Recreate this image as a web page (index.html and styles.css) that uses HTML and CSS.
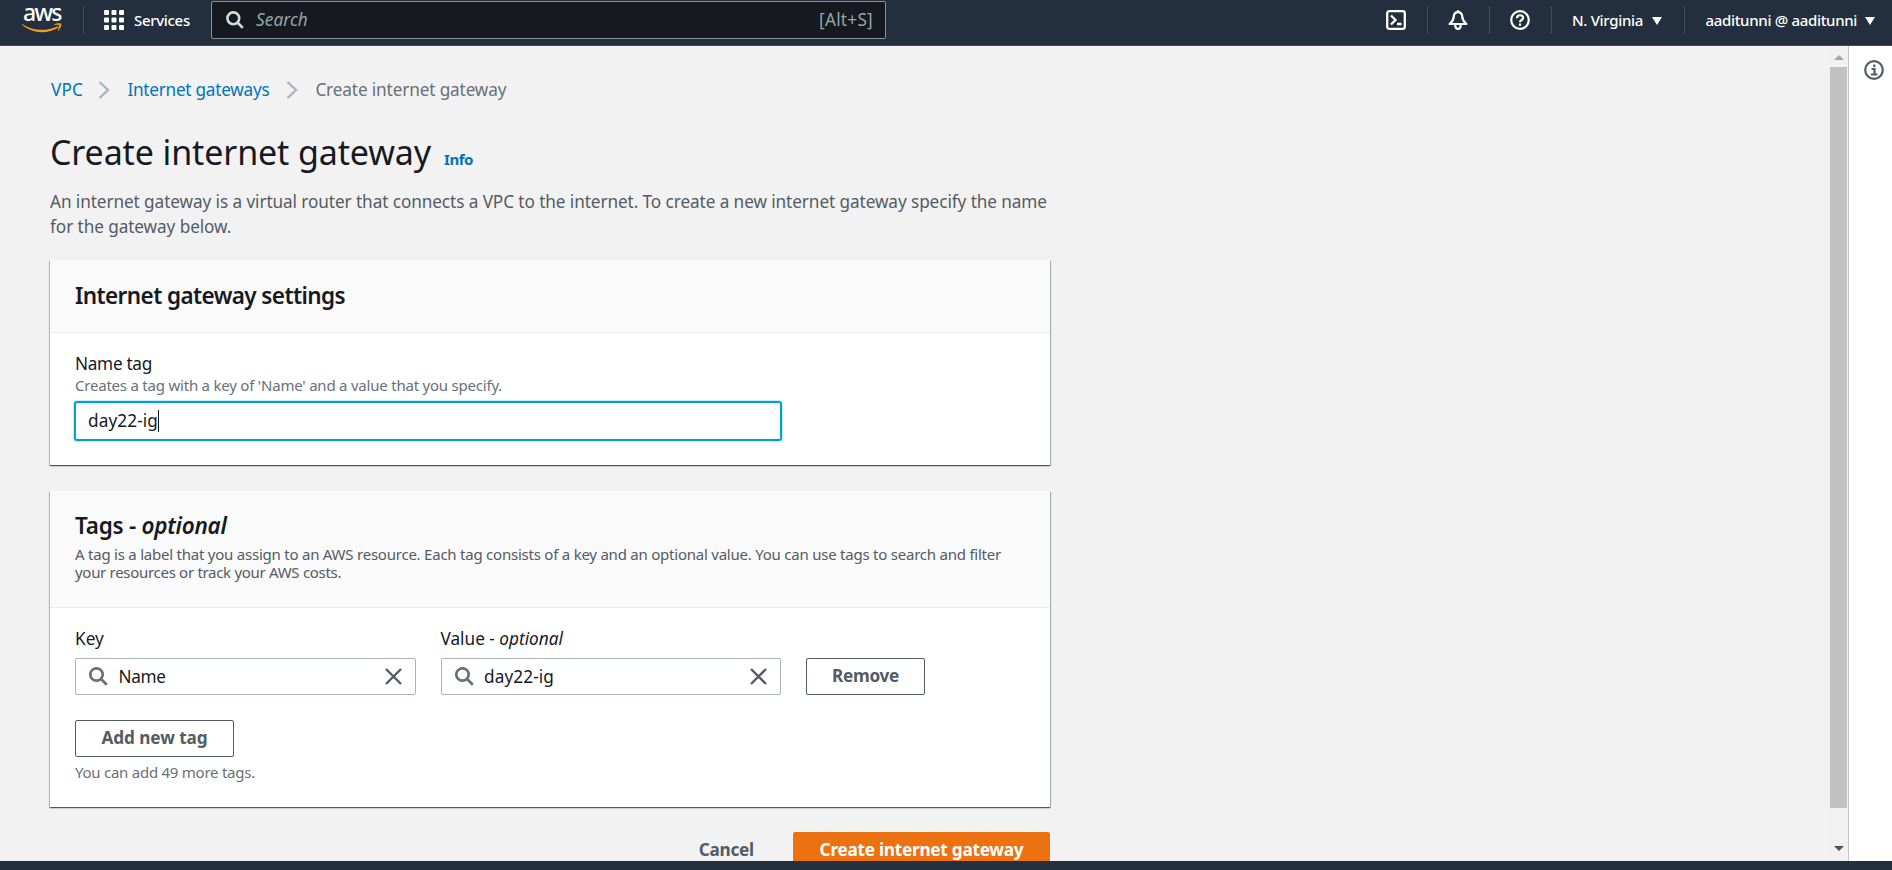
FILE: index.html
```html
<!DOCTYPE html>
<html lang="en">
<head>
<meta charset="utf-8">
<title>Create internet gateway</title>
<link rel="stylesheet" href="styles.css">
</head>
<body>
<header class="topbar">
  <div class="brand">
    <span class="brand-name">aws</span>
    <svg class="smile" width="40" height="11" viewBox="0 0 40 11"><path d="M0.5 1.2C11 8 24 8.6 35.200 3.400C36.500 3 37 4 36 4.700C25 11.500 10 10.500 0.300 2.100C-0.200 1.500 0 1 0.500 1.200Z" fill="#f79a1c"/><path d="M32 1.400C34.500 -0.200 39 -0.100 39.300 0.800C39.700 2.200 38.500 5.800 36.500 7.600C36 8 35.700 7.700 35.900 7.200C36.600 5.500 37.500 3 37.100 2.300C36.600 1.600 34 1.800 32.500 2C31.800 2.100 31.500 1.800 32 1.400Z" fill="#f79a1c"/></svg>
  </div>
  <i class="rule"></i>
  <div class="services">
    <svg width="20" height="20" viewBox="0 0 20 20" fill="#fff"><rect width="5" height="5" rx="1"/><rect x="7.500" width="5" height="5" rx="1"/><rect x="15" width="5" height="5" rx="1"/><rect y="7.500" width="5" height="5" rx="1"/><rect x="7.500" y="7.500" width="5" height="5" rx="1"/><rect x="15" y="7.500" width="5" height="5" rx="1"/><rect y="15" width="5" height="5" rx="1"/><rect x="7.500" y="15" width="5" height="5" rx="1"/><rect x="15" y="15" width="5" height="5" rx="1"/></svg>
    <span class="nav-text">Services</span>
  </div>
  <div class="search">
    <svg width="18" height="18" viewBox="0 0 18 18" fill="none" stroke="#d5dbdb" stroke-width="2.600"><circle cx="7.300" cy="7.300" r="5.900"/><path d="M11.500 11.500L16.800 16.800"/></svg>
    <span class="search-hint">Search</span>
    <span class="search-key">[Alt+S]</span>
  </div>
  <div class="tools">
    <svg width="20" height="20" viewBox="0 0 20 20" fill="none" stroke="#fff" stroke-width="2.300"><rect x="1.200" y="1.200" width="17.600" height="17.600" rx="2"/><path d="M5 5.500L9.500 10L5 14.500M11 14H15.500"/></svg>
    <i class="rule"></i>
    <svg width="20" height="20" viewBox="0 0 20 20" fill="none" stroke="#fff" stroke-width="2.200" stroke-linejoin="round"><path d="M10 2.200C7.300 2.200 5.900 4 5.700 6.800C5.500 9.600 4.600 11.500 1.600 14H18.400C15.400 11.500 14.500 9.600 14.300 6.800C14.100 4 12.700 2.200 10 2.200ZM10 2.200V0.200M7.200 14.700C7.200 20.200 12.800 20.200 12.800 14.700"/></svg>
    <i class="rule"></i>
    <svg width="20" height="20" viewBox="0 0 20 20" fill="none" stroke="#fff" stroke-width="2.200"><circle cx="10" cy="10" r="8.800"/><path d="M7 8.200C7 4.300 13.100 4.300 13.100 8C13.100 10 10 10 10 12.200M10 13.600V15.800"/></svg>
    <i class="rule"></i>
    <span class="nav-text">N. Virginia</span><i class="caret"></i>
    <i class="rule rule-account"></i>
    <span class="nav-text account">aaditunni @ aaditunni</span><i class="caret"></i>
  </div>
</header>
<div class="shell">
  <main class="page">
    <nav class="crumbs">
      <a class="root">VPC</a>
      <svg class="chev" width="12" height="18" viewBox="0 0 12 18"><path d="M1.500 1L10 9L1.500 17"/></svg>
      <a class="parent">Internet gateways</a>
      <svg class="chev" width="12" height="18" viewBox="0 0 12 18"><path d="M1.500 1L10 9L1.500 17"/></svg>
      <span class="current">Create internet gateway</span>
    </nav>
    <div class="title-row"><h1>Create internet gateway</h1><a class="info">Info</a></div>
    <p class="lead">An internet gateway is a virtual router that connects a VPC to the internet. To create a new internet gateway specify the name<br>for the gateway below.</p>

    <section class="panel panel-settings">
      <div class="panel-head"><h2 class="h2-settings">Internet gateway settings</h2></div>
      <div class="panel-body">
        <label class="label name-label">Name tag</label>
        <div class="helper name-helper">Creates a tag with a key of 'Name' and a value that you specify.</div>
        <div class="input focused"><span class="value">day22-ig</span><i class="cursor"></i></div>
      </div>
    </section>

    <section class="panel panel-tags">
      <div class="panel-head"><h2>Tags - <em>optional</em></h2>
        <p class="helper dark">A tag is a label that you assign to an AWS resource. Each tag consists of a key and an optional value. You can use tags to search and filter<br><span class="tight">your resources or track your AWS costs.</span></p></div>
      <div class="panel-body">
        <div class="tag-row">
          <div class="field">
            <label class="label">Key</label>
            <div class="input"><svg class="lens" width="19" height="19" viewBox="0 0 19 19"><circle cx="7.500" cy="7.500" r="6.200"/><path d="M12 12L17.800 17.800"/></svg><span class="value key-value">Name</span><svg class="clear" width="17" height="17" viewBox="0 0 17 17"><path d="M1 1L16 16M16 1L1 16"/></svg></div>
          </div>
          <div class="field">
            <label class="label">Value - <em>optional</em></label>
            <div class="input"><svg class="lens" width="19" height="19" viewBox="0 0 19 19"><circle cx="7.500" cy="7.500" r="6.200"/><path d="M12 12L17.800 17.800"/></svg><span class="value">day22-ig</span><svg class="clear" width="17" height="17" viewBox="0 0 17 17"><path d="M1 1L16 16M16 1L1 16"/></svg></div>
          </div>
          <button class="btn btn-remove">Remove</button>
        </div>
        <button class="btn btn-add">Add new tag</button>
        <div class="helper limit">You can add 49 more tags.</div>
      </div>
    </section>

    <div class="actions"><button class="btn-link">Cancel</button><button class="btn-primary">Create internet gateway</button></div>
  </main>
  <div class="scrollbar"><i class="arrow up"></i><i class="thumb"></i><i class="arrow down"></i></div>
  <aside class="side"><svg width="20" height="20" viewBox="0 0 20 20" fill="none" stroke="#545b64" stroke-width="2.200"><circle cx="10" cy="10" r="8.800"/><path d="M10.300 4.500V7M7.500 9H10.500V14M7 14.500H13.500"/></svg></aside>
</div>
<footer class="footer"></footer>
</body>
</html>
```
FILE: styles.css
```css
* { box-sizing: border-box; }
body { margin: 0; width: 1892px; height: 870px; overflow: hidden; display: flex; flex-direction: column; font-family: "Noto Sans", "Open Sans", sans-serif; font-size: 17.2px; color: #16191f; background: #f2f2f2; }
h1, h2, p { margin: 0; font-weight: 400; }
svg { display: block; flex: none; }
button { font-family: inherit; padding: 0; }

.topbar { height: 46px; flex: none; background: #232f3e; border-bottom: 1px solid #414d5c; display: flex; align-items: flex-start; color: #fff; }
.brand { width: 61px; padding: 0 0 0 22px; margin-right: 22px; }
.brand-name { display: block; height: 23px; margin-left: 1px; font-size: 23px; line-height: 24px; font-weight: 500; letter-spacing: -1.700px; }
.rule { width: 1px; height: 28px; margin-top: 6px; background: #414d5c; flex: none; }
.services { display: flex; margin: 10px 0 0 20px; width: 107px; gap: 10px; }
.nav-text { font-size: 15px; line-height: 20px; font-weight: 500; white-space: nowrap; letter-spacing: -.32px; }
.search { width: 675px; height: 38px; margin-top: 1px; border: 1px solid #879596; border-radius: 2px; background: #161a20; display: flex; align-items: center; padding: 0 12px 1px 14px; color: #95a5a6; }
.search-hint { font-style: italic; margin-left: 12px; letter-spacing: .1px; }
.search-key { margin-left: auto; letter-spacing: .25px; }
.tools { display: flex; margin-left: 500px; }
.tools > svg { margin-top: 10px; }
.tools > .rule { margin-left: 20.500px; margin-right: 20.500px; }
.tools > .rule-account { margin-left: 22px; }
.tools > .nav-text { margin-top: 10px; }
.caret { border: 5px solid transparent; border-top: 8px solid #fff; border-bottom: 0; height: 0; margin: 17px 0 0 9px; }
.account + .caret { margin-left: 8px; }

.shell { height: 815px; flex: none; display: flex; overflow: hidden; }
.page { flex: 1; padding: 31px 0 0 50px; overflow: hidden; }
.crumbs { height: 25px; display: flex; align-items: center; line-height: 25px; color: #687078; }
.crumbs a, .info { color: #0073bb; }
.root { margin-left: 1px; margin-right: -1.500px; letter-spacing: .1px; }
.parent { letter-spacing: -.256px; }
.current { letter-spacing: -.133px; }
.chev { margin: 0 17px; fill: none; stroke: #aab7b8; stroke-width: 2.400; }
.title-row { margin-top: 28px; height: 44px; line-height: 44px; display: flex; align-items: baseline; }
h1 { font-size: 34px; letter-spacing: -.124px; }
.info { font-size: 15px; font-weight: 700; margin-left: 13px; letter-spacing: -.44px; }
.lead { margin-top: 15px; height: 50px; line-height: 25px; color: #545b64; white-space: nowrap; letter-spacing: -.085px; }
.panel { width: 1000px; background: #fff; box-shadow: 0 1px 1px 0 rgba(0,28,36,.5), 1px 1px 1px 0 rgba(0,28,36,.25), -1px 1px 1px 0 rgba(0,28,36,.2); }
.panel-settings { margin-top: 21px; height: 205px; }
.panel-tags { margin-top: 26px; height: 316px; }
.panel-head { background: #fafafa; border-bottom: 1px solid #eaeded; padding: 22px 25px 0; height: 73px; }
.panel-tags .panel-head { height: 117px; padding-top: 21px; }
.panel-body { padding: 19px 25px 0; }
.panel-tags .panel-body { padding-top: 18px; }
h2 { font-size: 22.500px; line-height: 28px; font-weight: 600; letter-spacing: -.25px; }
.h2-settings { letter-spacing: -.59px; }
.label { display: table; line-height: 24px; }
.name-label { letter-spacing: -.295px; }
.helper { font-size: 15px; line-height: 20px; color: #687078; white-space: nowrap; letter-spacing: -.216px; }
.name-helper { margin-top: -1px; }
.helper.dark { line-height: 18.300px; color: #545b64; margin-top: 5px; letter-spacing: -.229px; }
.tight { letter-spacing: -.3px; }
.input { display: flex; align-items: center; border: 1px solid #aab7b8; border-radius: 2px; height: 37px; background: #fff; padding: 0 13px 0 13px; }
.value { letter-spacing: .1px; }
.key-value { letter-spacing: -.37px; }
.focused { margin-top: 7px; width: 706px; height: 38px; padding: 0 12px 1px; border-color: #00a1c9; box-shadow: 0 0 0 1px #00a1c9, 0 0 0 2px #c6f0fb; }
.cursor { width: 1px; height: 22px; background: #16191f; }
.tag-row { display: flex; gap: 25px; }
.field { width: 340.500px; }
.field .label { padding-top: 1px; }
.field .input { margin-top: 7px; }
.lens { fill: none; stroke: #687078; stroke-width: 2.700; margin-right: 10.500px; }
.clear { fill: none; stroke: #545b64; stroke-width: 2.400; margin-left: auto; }
.btn { display: block; height: 37px; border: 1px solid #545b64; border-radius: 2px; background: #fff; color: #545b64; font-size: 17.200px; font-weight: 700; line-height: 33px; padding-bottom: 2px; }
.btn-remove { width: 119px; margin-top: 32px; letter-spacing: -.3px; }
.btn-add { width: 159px; margin-top: 25px; letter-spacing: -.09px; }
.limit { margin-top: 5px; letter-spacing: -.25px; }
.actions { width: 1000px; margin-top: 25px; display: flex; justify-content: flex-end; gap: 39px; }
.actions button { height: 37px; border: 0; border-radius: 2px; font-size: 17.200px; font-weight: 700; line-height: 34px; padding-bottom: 2px; letter-spacing: -.25px; }
.btn-link { background: none; color: #545b64; }
.btn-primary { width: 257px; background: #ec7211; color: #fff; }

.scrollbar { width: 17px; background: #f1f1f1; display: flex; flex-direction: column; align-items: center; }
.arrow { border: 5px solid transparent; height: 0; }
.up { border-bottom: 5px solid #a3a3a3; border-top: 0; margin: 9px 0 7px; }
.thumb { width: 17px; height: 741px; background: #c1c1c1; }
.down { border-top: 5px solid #505050; border-bottom: 0; margin-top: 38px; }
.side { width: 44px; margin-left: 1px; background: #fff; border-left: 1px solid #c4c8ca; padding: 14px 0 0 15px; }
.footer { flex: 1; background: #232f3e; }
```
